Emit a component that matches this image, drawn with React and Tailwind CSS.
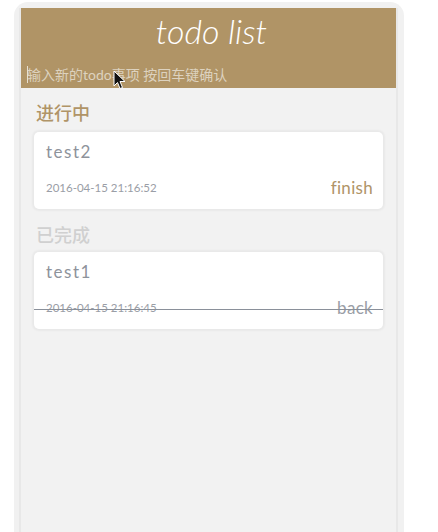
import React from "react";

const font = { fontFamily: 'Lato, "Noto Sans CJK SC", sans-serif' };

function Card({ title, date, action, done }) {
  return (
    <div className="relative mx-[13px] h-[77px] rounded-[5px] bg-white shadow-[0_0_2px_2px_rgba(0,0,0,0.04)] px-[12px] pt-[9px] flex flex-col">
      <div className="text-[17px] leading-[22px] tracking-[1.5px] text-[#8e939b]">{title}</div>
      <div className="mt-auto mb-[12px] flex items-center justify-between">
        <span className="text-[11.5px] leading-[16px] text-[#9a9ea6]">{date}</span>
        <span className={"text-[17px] leading-[18px] -mr-[2px] tracking-[0.3px] " + (done ? "text-[#9a9ea6]" : "text-[#b09467]")}>{action}</span>
      </div>
      {done && <div className="absolute left-0 right-0 top-[57px] h-px bg-[#8a909a]" />}
    </div>
  );
}

export default function App() {
  return (
    <div className="relative w-[438px] h-[532px] bg-white overflow-hidden" style={font}>
      <div className="ml-[14px] mt-[2px] w-[390px] h-[540px] rounded-t-[14px] bg-[#f1f1f1] pl-[5px] pr-[6px] pt-[6px]">
        <div className="h-full border-x-2 border-[#e8e8e8] bg-[#f2f2f2]">
          <div className="h-[80px] bg-[#b09466] flex flex-col">
            <div className="h-[46px] flex items-center justify-center text-white italic font-light text-[34px] leading-none pl-[6px]">
              todo list
            </div>
            <div className="relative pl-[6px] pt-[12px] text-[14px] leading-[18px] text-[#ddd2bf] flex items-center">
              <span className="absolute left-[6px] top-[12px] h-[17px] w-px bg-[#e8e0d0]" />
              <span>输入新的todo事项 按回车键确认</span>
            </div>
          </div>
          <div className="pt-[15px] pb-[9px] pl-[15px] text-[18px] leading-[20px] font-medium text-[#b09467]">进行中</div>
          <Card title="test2" date="2016-04-15 21:16:52" action="finish" />
          <div className="pt-[16px] pb-[7px] pl-[15px] text-[18px] leading-[20px] font-medium text-[#d0d0d0]">已完成</div>
          <Card title="test1" date="2016-04-15 21:16:45" action="back" done />
        </div>
      </div>
      <svg className="absolute left-[113px] top-[70px]" width="14" height="20" viewBox="0 0 14 20">
        <path d="M1 1 L1 16 L4.5 12.5 L7 18.5 L9.5 17.5 L7 11.5 L12 11.5 Z" fill="#111" stroke="#fff" strokeWidth="1" />
      </svg>
    </div>
  );
}
